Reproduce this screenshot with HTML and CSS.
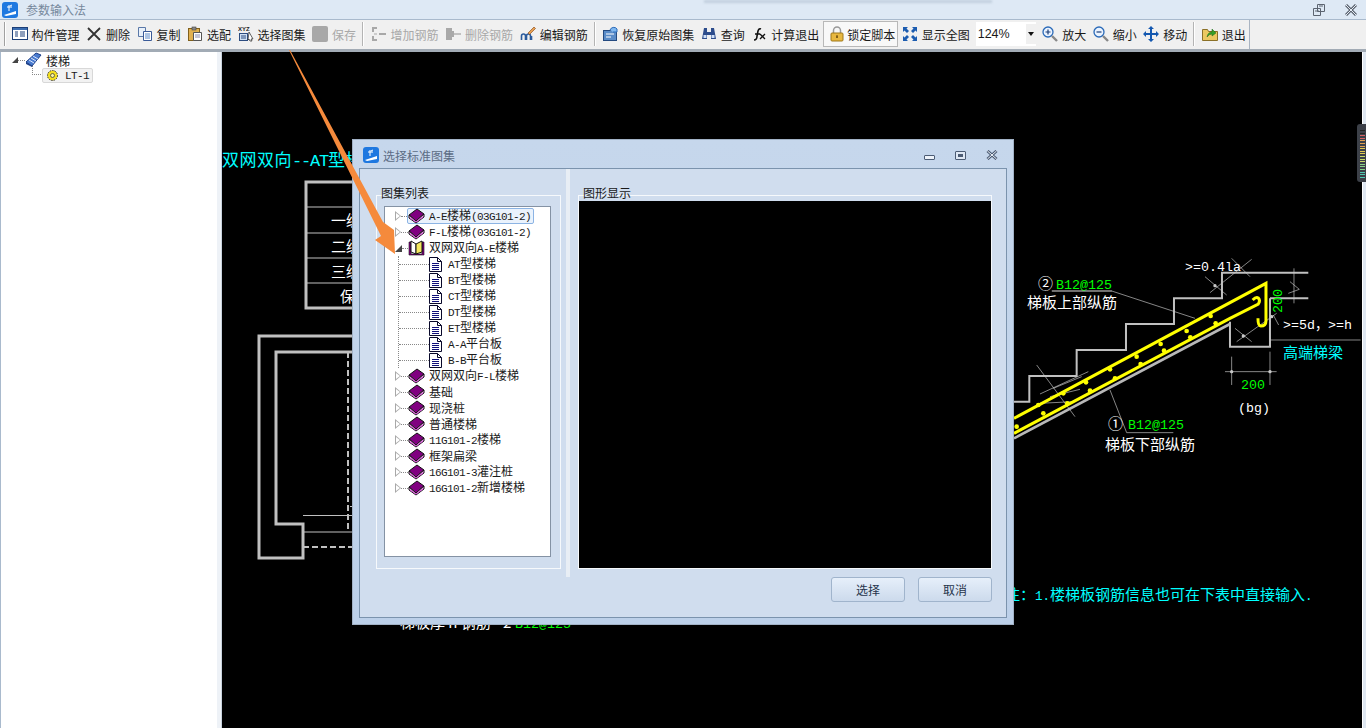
FILE: index.html
```html
<!DOCTYPE html>
<html lang="zh-CN">
<head>
    <meta charset="UTF-8">
    <title>参数输入法</title>
    <link rel="stylesheet" href="styles.css">
</head>
<body>
    <svg class="defs" width="0" height="0">
        <symbol id="book" viewBox="0 0 17 16">
            <path d="M1 7 9 1l7 5-8 7z" fill="#800080" stroke="#111"/>
            <path d="M1 7v3l7 5 8-6V6l-8 7z" fill="#f0a0f0" stroke="#111"/>
            <path d="M2 10l6 4 7-5" fill="none" stroke="#d050d0"/>
        </symbol>
        <symbol id="doc" viewBox="0 0 13 15">
            <path d="M.5.5h8l4 4v10H.5z" fill="#fff" stroke="#08082a"/>
            <path d="M8.5.5v4h4" fill="none" stroke="#08082a"/>
            <path d="M3 6.500h7M3 8.500h7M3 10.500h7M3 12.500h7" stroke="#10107a"/>
        </symbol>
        <symbol id="logo" viewBox="0 0 16 16">
            <rect width="16" height="16" rx="3" fill="#1e78e0"/>
            <path d="M2 13l12-4v3l-10 2z" fill="#fff"/>
            <path d="M7 3v6M5 5h5M10 3l-2 1" stroke="#fff" fill="none"/>
        </symbol>
    </svg>

    <div class="titlebar">
        <svg class="title-logo" width="16" height="16"><use href="#logo"/></svg>
        <span class="title-text">参数输入法</span>
        <div class="win-btns">
            <svg width="12" height="12" viewBox="0 0 12 12"><path d="M4.500.5h7v7h-7zM.5 4.500h7v7h-7zM2 7h4M6 2h4" fill="none" stroke="#5c6470"/></svg>
            <svg width="12" height="12" viewBox="0 0 12 12"><path d="M1 1l10 10M11 1 1 11" stroke="#5c6470" stroke-width="3"/><path d="M1 1l10 10M11 1 1 11" stroke="#e6edf6"/></svg>
        </div>
    </div>

    <div class="toolbar">
        <div class="grip"></div>
        <div class="tool">
            <svg width="16" height="16" viewBox="0 0 16 16"><rect x=".5" y="1.500" width="15" height="12" fill="#fff" stroke="#1c3f78"/><path d="M1 2h14v2H1z" fill="#3a6cb0"/><path d="M3 6h3M3 8h3M3 10h3M8 6h5M8 8h5M8 10h5" stroke="#1c3f78"/></svg>
            <span>构件管理</span>
        </div>
        <div class="tool">
            <svg width="16" height="16" viewBox="0 0 16 16"><path d="M2 2l12 12M14 2 2 14" stroke="#333" stroke-width="1.800"/></svg>
            <span>删除</span>
        </div>
        <div class="tool">
            <svg width="16" height="16" viewBox="0 0 16 16"><path d="M1.500 1.500h7v9h-7z" fill="#e8f0fa" stroke="#5a78a8"/><path d="M6.500 5.500h8v9h-8z" fill="#fff" stroke="#3a5a98"/><path d="M8 8h5M8 10h5M8 12h5" stroke="#5a88c8"/></svg>
            <span>复制</span>
        </div>
        <div class="tool">
            <svg width="16" height="16" viewBox="0 0 16 16"><rect x="1.500" y="2.500" width="11" height="12" fill="#e0b050" stroke="#80601c"/><rect x="5" y="1" width="4" height="3" fill="#888" stroke="#444" stroke-width=".6"/><path d="M6.500 6.500h8v8h-8z" fill="#fff" stroke="#555"/><path d="M8 9h5M8 11h5" stroke="#88a"/></svg>
            <span>选配</span>
        </div>
        <div class="tool">
            <svg width="16" height="16" viewBox="0 0 16 16"><text x="0" y="5" class="xyz">XYZ</text><rect x="1.500" y="7.500" width="8" height="7" fill="#cfe0f4" stroke="#2c4c80"/><path d="M3 10h5M3 12h5" stroke="#2c4c80"/><path d="M11 6l4 7-2 0 1 2-2 0-1-2-1 1z" fill="#fff" stroke="#222" stroke-width=".7"/></svg>
            <span>选择图集</span>
        </div>
        <div class="tool off">
            <svg width="16" height="16" viewBox="0 0 16 16"><rect x="0" y="0" width="16" height="16" rx="2" fill="#a8a8a8"/></svg>
            <span>保存</span>
        </div>
        <div class="tool-sep"></div>
        <div class="tool off">
            <svg width="16" height="16" viewBox="0 0 16 16"><path d="M1 1h5v2H3v3H1zM1 10h2v3h3v2H1zM8 7h7v2H8z" fill="#a8a8a8"/><path d="M3 8h3" stroke="#a8a8a8"/></svg>
            <span>增加钢筋</span>
        </div>
        <div class="tool off">
            <svg width="16" height="16" viewBox="0 0 16 16"><path d="M1 2h6v3h2v6H7v3H1z" fill="#a8a8a8"/><path d="M9 7h7v2H9z" fill="#c0c0c0"/></svg>
            <span>删除钢筋</span>
        </div>
        <div class="tool">
            <svg width="16" height="16" viewBox="0 0 16 16"><path d="M1.500 14v-4q0-2 2-2t2 2v4M6.500 14v-4q0-2 2-2t2 2v4" fill="none" stroke="#2a5a9c" stroke-width="1.600"/><path d="M8 7l6-6 1.500 1.500-6 6z" fill="#e8a050" stroke="#804010" stroke-width=".6"/><path d="M11.500 14v-4" stroke="#2a5a9c" stroke-width="1.600"/></svg>
            <span>编辑钢筋</span>
        </div>
        <div class="tool-sep"></div>
        <div class="tool">
            <svg width="16" height="16" viewBox="0 0 16 16"><rect x="1.500" y="4.500" width="13" height="10" fill="#5a8cc8" stroke="#244a80"/><path d="M4 8h8M4 11h5" stroke="#fff"/><path d="M8 4a4 4 0 0 1 7-1v3h-4" fill="#80b8f0" stroke="#2a6ab8"/></svg>
            <span>恢复原始图集</span>
        </div>
        <div class="tool">
            <svg width="16" height="16" viewBox="0 0 16 16"><path d="M3 2h3v4h4V2h3l2 11h-5V9H6v4H1z" fill="#2c4c8c"/><rect x="2.500" y="9" width="3" height="3" fill="#cfe0f8"/><rect x="10.500" y="9" width="3" height="3" fill="#cfe0f8"/></svg>
            <span>查询</span>
        </div>
        <div class="tool">
            <svg width="16" height="16" viewBox="0 0 16 16"><path d="M3 14q3 0 3-4l1-5q1-3 3-2M4 8h5" fill="none" stroke="#111" stroke-width="1.600"/><path d="M9 8l5 5M14 8l-5 5" stroke="#111" stroke-width="1.300"/></svg>
            <span>计算退出</span>
        </div>
        <div class="tool checked">
            <svg width="16" height="16" viewBox="0 0 16 16"><path d="M4.500 7V4.500a3.500 3.500 0 0 1 7 0V7" fill="none" stroke="#999" stroke-width="1.500"/><rect x="2" y="7" width="12" height="8" rx="1" fill="#e8b840" stroke="#a07818"/><path d="M8 9v3M7 11h2" stroke="#604008"/></svg>
            <span>锁定脚本</span>
        </div>
        <div class="tool">
            <svg width="16" height="16" viewBox="0 0 16 16"><path d="M1 1h5L4.500 2.500 7 5 5 7 2.500 4.500 1 6zM15 1v5l-1.500-1.500L11 7 9 5l2.500-2.500L10 1zM1 15v-5l1.500 1.500L5 9l2 2-2.500 2.500L6 15zM15 15h-5l1.500-1.500L9 11l2-2 2.500 2.500L15 10z" fill="#1c5cb0"/></svg>
            <span>显示全图</span>
        </div>
        <div class="combo">
            <span class="combo-val">124%</span>
            <span class="combo-btn"></span>
        </div>
        <div class="tool">
            <svg width="16" height="16" viewBox="0 0 16 16"><circle cx="6" cy="6" r="5" fill="#eaf3ff" stroke="#2a6ab8" stroke-width="1.300"/><path d="M3.500 6h5M6 3.500v5" stroke="#1c3f78" stroke-width="1.200"/><path d="M10 10l5 5" stroke="#888" stroke-width="2.400"/></svg>
            <span>放大</span>
        </div>
        <div class="tool">
            <svg width="16" height="16" viewBox="0 0 16 16"><circle cx="6" cy="6" r="5" fill="#eaf3ff" stroke="#2a6ab8" stroke-width="1.300"/><path d="M3.500 6h5" stroke="#1c3f78" stroke-width="1.200"/><path d="M10 10l5 5" stroke="#888" stroke-width="2.400"/></svg>
            <span>缩小</span>
        </div>
        <div class="tool">
            <svg width="16" height="16" viewBox="0 0 16 16"><path d="M8 0l3 3H9v4h4V5l3 3-3 3V9H9v4h2l-3 3-3-3h2V9H3v2L0 8l3-3v2h4V3H5z" fill="#1458b0"/></svg>
            <span>移动</span>
        </div>
        <div class="tool-sep"></div>
        <div class="tool">
            <svg width="16" height="16" viewBox="0 0 16 16"><path d="M.5 3.500h5l1 2h9v9H.5z" fill="#ecc860" stroke="#8a7028"/><path d="M5 11q1-5 5-5V3l4 4-4 3V8q-3 0-5 3z" fill="#38a028" stroke="#1c6818" stroke-width=".5"/></svg>
            <span>退出</span>
        </div>
        <div class="toolbar-end"></div>
    </div>
    <div class="toolbar-rule"></div>

    <div class="main">
        <div class="side-tree">
            <div class="side-row">
                <span class="arrow-open"></span>
                <span class="dots"></span>
                <svg width="17" height="16" viewBox="0 0 17 16"><path d="M1 10 11 1l5 2-9 11z" fill="#4a7cd0" stroke="#1c3f88"/><path d="M4 8l5 3M6 6l5 3M8 4l5 3" stroke="#dbe8ff"/><path d="M1 10l6 4v1l-6-3z" fill="#1c3f88"/></svg>
                <span class="side-label">楼梯</span>
            </div>
            <div class="side-row child">
                <span class="elbow"></span>
                <span class="chip">
                    <svg width="13" height="13" viewBox="0 0 13 13"><circle cx="6.500" cy="6.500" r="5" fill="#f4e020" stroke="#333" stroke-dasharray="1.500 1"/><circle cx="6.500" cy="6.500" r="2" fill="#f8f4a0" stroke="#333" stroke-width=".7"/></svg>
                    <span class="mono">LT-1</span>
                </span>
            </div>
        </div>
        <div class="splitter"></div>
        <div class="canvas">
            <svg class="drawing" viewBox="222 52 1140 676" width="1140" height="676">
                <text x="222" y="166" class="cad cyan title-cad">双网双向<tspan class="num-wide">--AT</tspan>型楼梯</text>

                <g class="heavy">
                    <path d="M352 182H306V308H352"/>
                    <path d="M352 336H259V558H303V524H276V352H352"/>
                </g>
                <g class="light">
                    <path d="M306 207H352M306 233H352M306 258H352M306 283H352"/>
                    <path d="M303 532H352" stroke-width="2"/>
                </g>
                <path class="dash" d="M348 352V532M303 547H352"/>
                <path class="thin" d="M303 515.500H352M350 506.500H352"/>
                <text x="331" y="226" class="cad white">一级抗震</text>
                <text x="331" y="252" class="cad white">二级抗震</text>
                <text x="331" y="277" class="cad white">三级抗震</text>
                <text x="340" y="302" class="cad white">保护层</text>
                <text x="400" y="628" class="cad white">梯板厚 h 钢筋</text>
                <text x="503" y="628" class="cad white">2</text>
                <text x="515" y="628" class="num green">B12@125</text>

                <!-- stair detail, drawn in 3x units -->
                <g transform="translate(1010 250) scale(.3333)">
                    <g fill="none" stroke="#c0c0c0" stroke-width="6">
                        <path d="M12 455H58V378H200V300H348V222H492V145H636V68H895"/>
                        <path d="M780 145H895M660 215V290H780V145"/>
                    </g>
                    <path d="M12 565 660 222" stroke="#b8b8b8" stroke-width="8"/>
                    <g fill="none" stroke="#c8c8c8" stroke-width="2">
                        <path d="M780 270H1052M125 123H305L555 205M300 420 350 548H490"/>
                        <path d="M80 345 195 500M90 432 235 365M130 415 215 380M120 440 210 418M90 460 190 455"/>
                        <path d="M665 320V405M780 305V405M645 365H800"/>
                        <path d="M585 80 650 135M600 128 725 28M665 25 720 80"/>
                        <path d="M675 235 725 275M680 275 800 190M790 195 806 225"/>
                        <path d="M852 55V160M840 95 868 118 835 130"/>
                    </g>
                    <g fill="#c8c8c8">
                        <circle cx="615" cy="107" r="5"/>
                        <circle cx="700" cy="258" r="5"/>
                        <circle cx="665" cy="365" r="5"/>
                        <circle cx="780" cy="365" r="5"/>
                        <circle cx="785" cy="200" r="5"/>
                    </g>
                    <g fill="none" stroke="#ffff00" stroke-width="9">
                        <path d="M12 505 768 100V212Q768 228 752 228 744 228 744 205"/>
                        <path d="M12 550 660 205 745 162Q752 152 745 144 738 140 728 150"/>
                    </g>
                    <g fill="#ffff00">
                        <circle cx="20" cy="530" r="7"/><circle cx="85" cy="465" r="7"/><circle cx="100" cy="490" r="7"/>
                        <circle cx="160" cy="430" r="7"/><circle cx="172" cy="460" r="7"/><circle cx="228" cy="397" r="7"/>
                        <circle cx="240" cy="422" r="7"/><circle cx="300" cy="358" r="7"/><circle cx="315" cy="385" r="7"/>
                        <circle cx="380" cy="320" r="7"/><circle cx="392" cy="342" r="7"/><circle cx="452" cy="282" r="7"/>
                        <circle cx="462" cy="302" r="7"/><circle cx="530" cy="243" r="7"/><circle cx="541" cy="262" r="7"/>
                        <circle cx="602" cy="198" r="7"/><circle cx="617" cy="220" r="7"/>
                    </g>
                </g>

                <text x="1038" y="289" class="cad white">②</text>
                <text x="1056" y="289" class="num green">B12@125</text>
                <path class="thin-g" d="M1052 291H1112"/>
                <text x="1027" y="308" class="cad white">梯板上部纵筋</text>
                <text x="1108" y="429" class="cad white">①</text>
                <text x="1128" y="429" class="num green">B12@125</text>
                <text x="1105" y="450" class="cad white">梯板下部纵筋</text>
                <text x="1185" y="271" class="num white">&gt;=0.4la</text>
                <text x="1283" y="329" class="num white">&gt;=5d，&gt;=h</text>
                <text x="1283" y="358" class="cad cyan">高端梯梁</text>
                <text x="1241" y="389" class="num green">200</text>
                <text x="1238" y="412" class="num white">(bg)</text>
                <text x="1282" y="313" class="num green" transform="rotate(-90 1282 313)">200</text>
                <text x="1005" y="600" class="cad cyan">注：<tspan class="num-note">1.</tspan>楼梯板钢筋信息也可在下表中直接输入<tspan class="num-note">.</tspan></text>
            </svg>
        </div>
        <div class="right-edge"></div>
    </div>

    <!-- overlays -->
    <div class="top-shadow"></div>
    <div class="meter">
        <i class="m0"></i><i class="m0"></i><i class="m1"></i><i class="m1"></i><i class="m2"></i><i class="m2"></i><i class="m2"></i>
        <i class="m3"></i><i class="m3"></i><i class="m3"></i><i class="m4"></i><i class="m4"></i><i class="m4"></i><i class="m5"></i>
        <i class="m5"></i><i class="m5"></i><i class="m6"></i><i class="m6"></i><i class="m6"></i>
    </div>

    <div class="dialog">
        <div class="dlg-title">
            <svg width="16" height="16"><use href="#logo"/></svg>
            <span class="dlg-caption">选择标准图集</span>
            <div class="dlg-btns">
                <span class="btn-min"></span>
                <span class="btn-max"></span>
                <svg width="12" height="10" viewBox="0 0 12 10"><path d="M1.500 1l9 8M10.500 1l-9 8" stroke="#4c5c74" stroke-width="3"/><path d="M1.500 1l9 8M10.500 1l-9 8" stroke="#eef3fa"/></svg>
            </div>
        </div>
        <div class="dlg-body">
            <div class="dlg-panes">
                <div class="pane-left">
                    <div class="group">
                        <span class="group-label">图集列表</span>
                        <div class="tree">
                            <div class="row"><span class="tri"></span><span class="dots short"></span><span class="sel"><svg width="17" height="16"><use href="#book"/></svg><span class="row-text"><span class="mono">A-E</span>楼梯<span class="mono">(03G101-2)</span></span></span></div>
                            <div class="row"><span class="tri"></span><span class="dots"></span><svg width="17" height="16"><use href="#book"/></svg><span class="row-text"><span class="mono">F-L</span>楼梯<span class="mono">(03G101-2)</span></span></div>
                            <div class="row"><span class="tri open"></span><span class="dots short"></span>
                                <svg width="17" height="16" viewBox="0 0 17 16"><path d="M1 2h2v12h11V2h2v13H1z" fill="#800080" stroke="#111" stroke-width=".6"/><path d="M3 1l5 3v10l-5-2z" fill="#fff" stroke="#111"/><path d="M8 4l6-3v11l-6 2z" fill="#f4e860" stroke="#111"/></svg>
                                <span class="row-text">双网双向<span class="mono">A-E</span>楼梯</span></div>
                            <div class="sub">
                                <div class="row leaf"><span class="elbow"></span><svg width="13" height="15"><use href="#doc"/></svg><span class="row-text"><span class="mono">AT</span>型楼梯</span></div>
                                <div class="row leaf"><span class="elbow"></span><svg width="13" height="15"><use href="#doc"/></svg><span class="row-text"><span class="mono">BT</span>型楼梯</span></div>
                                <div class="row leaf"><span class="elbow"></span><svg width="13" height="15"><use href="#doc"/></svg><span class="row-text"><span class="mono">CT</span>型楼梯</span></div>
                                <div class="row leaf"><span class="elbow"></span><svg width="13" height="15"><use href="#doc"/></svg><span class="row-text"><span class="mono">DT</span>型楼梯</span></div>
                                <div class="row leaf"><span class="elbow"></span><svg width="13" height="15"><use href="#doc"/></svg><span class="row-text"><span class="mono">ET</span>型楼梯</span></div>
                                <div class="row leaf"><span class="elbow"></span><svg width="13" height="15"><use href="#doc"/></svg><span class="row-text"><span class="mono">A-A</span>平台板</span></div>
                                <div class="row leaf"><span class="elbow"></span><svg width="13" height="15"><use href="#doc"/></svg><span class="row-text"><span class="mono">B-B</span>平台板</span></div>
                            </div>
                            <div class="row"><span class="tri"></span><span class="dots"></span><svg width="17" height="16"><use href="#book"/></svg><span class="row-text">双网双向<span class="mono">F-L</span>楼梯</span></div>
                            <div class="row"><span class="tri"></span><span class="dots"></span><svg width="17" height="16"><use href="#book"/></svg><span class="row-text">基础</span></div>
                            <div class="row"><span class="tri"></span><span class="dots"></span><svg width="17" height="16"><use href="#book"/></svg><span class="row-text">现浇桩</span></div>
                            <div class="row"><span class="tri"></span><span class="dots"></span><svg width="17" height="16"><use href="#book"/></svg><span class="row-text">普通楼梯</span></div>
                            <div class="row"><span class="tri"></span><span class="dots"></span><svg width="17" height="16"><use href="#book"/></svg><span class="row-text"><span class="mono">11G101-2</span>楼梯</span></div>
                            <div class="row"><span class="tri"></span><span class="dots"></span><svg width="17" height="16"><use href="#book"/></svg><span class="row-text">框架扁梁</span></div>
                            <div class="row"><span class="tri"></span><span class="dots"></span><svg width="17" height="16"><use href="#book"/></svg><span class="row-text"><span class="mono">16G101-3</span>灌注桩</span></div>
                            <div class="row"><span class="tri"></span><span class="dots"></span><svg width="17" height="16"><use href="#book"/></svg><span class="row-text"><span class="mono">16G101-2</span>新增楼梯</span></div>
                        </div>
                    </div>
                </div>
                <div class="pane-split"></div>
                <div class="pane-right">
                    <div class="group">
                        <span class="group-label">图形显示</span>
                        <div class="preview"></div>
                    </div>
                </div>
            </div>
            <div class="dlg-foot">
                <button class="dlg-button">选择</button>
                <button class="dlg-button">取消</button>
            </div>
        </div>
    </div>

    <svg class="big-arrow" width="120" height="210" viewBox="285 48 120 210">
        <path d="M289 50 290 50 383 222 394 230 395 254 375 240 381 236z" fill="#f58a3c"/>
    </svg>
</body>
</html>
```

FILE: styles.css
```css
* {
    box-sizing: border-box;
}
html, body {
    margin: 0;
    height: 100%;
}
body {
    width: 1366px;
    height: 728px;
    overflow: hidden;
    position: relative;
    display: flex;
    flex-direction: column;
    font-family: "Noto Sans CJK SC", "Liberation Sans", sans-serif;
    font-size: 12px;
    color: #1a1a1a;
    background: #dee9f5;
}
svg {
    display: block;
    flex: none;
}
.defs {
    position: absolute;
}
.mono {
    font-family: "Liberation Mono", monospace;
    font-size: 11px;
    letter-spacing: -.6px;
    white-space: nowrap;
}

/* title bar */
.titlebar {
    height: 20px;
    display: flex;
    align-items: center;
    padding-left: 2px;
    background: #dee9f5;
    border-bottom: 1px solid #a9bacd;
    flex: none;
}
.title-text {
    margin-left: 8px;
    color: #76889c;
}
.win-btns {
    margin-left: auto;
    display: flex;
    gap: 20px;
    padding-right: 9px;
}

/* toolbar */
.toolbar {
    height: 29px;
    display: flex;
    align-items: center;
    padding: 0 0 1px 4px;
    background: #f0f0f0;
    flex: none;
}
.toolbar-end {
    margin-left: auto;
    width: 117px;
    height: 29px;
    border-left: 1px solid #a9b4c2;
}
.grip {
    width: 2px;
    height: 24px;
    margin-right: 2px;
    border-left: 1px solid #a0a0a0;
    border-right: 1px solid #fff;
}
.tool {
    display: flex;
    align-items: center;
    gap: 4px;
    height: 24px;
    padding: 0 3px 0 3.500px;
    white-space: nowrap;
}
.tool.off {
    color: #a8a8a8;
}
.tool.checked {
    height: 26px;
    padding: 0 2px 0 5px;
    gap: 2px;
    margin: 0 0 0 1px;
    background: #f8f8f8;
    border: 1px solid #b8b8b8;
}
.tool-sep {
    width: 2px;
    height: 24px;
    margin: 0 3px;
    background: #b4b4b4;
    border-right: 1px solid #fff;
}
.combo {
    width: 60px;
    height: 24px;
    margin: 0 3px 0 3px;
    display: flex;
    align-items: center;
    background: #fff;
    font-size: 12.500px;
    font-family: "Liberation Sans", sans-serif;
}
.combo-val {
    flex: 1;
    padding-left: 2px;
}
.combo-btn {
    width: 10px;
    height: 20px;
    background: #f0f0f0;
    position: relative;
}
.combo-btn::after {
    content: "";
    position: absolute;
    left: 2px;
    top: 8px;
    border: 3px solid transparent;
    border-top: 4px solid #111;
}
.toolbar-rule {
    height: 3px;
    background: #a2abb5;
    flex: none;
}

/* main area */
.main {
    flex: 1;
    display: flex;
    min-height: 0;
}
.side-tree {
    width: 217px;
    background: #fff;
    border-left: 1px solid #a9bacd;
}
.side-row {
    height: 16px;
    display: flex;
    align-items: center;
    padding-left: 11px;
    font-size: 12px;
}
.arrow-open {
    width: 0;
    height: 0;
    border-left: 6px solid transparent;
    border-bottom: 6px solid #444;
}
.side-row .dots {
    width: 7px;
}
.side-label {
    margin-left: 4px;
}
.side-row.child {
    padding-left: 31px;
    align-items: flex-start;
}
.side-row.child .elbow {
    height: 9px;
    width: 9px;
    flex: none;
    margin-top: -2px;
}
.chip {
    display: flex;
    align-items: center;
    gap: 6px;
    height: 15px;
    width: 51px;
    padding: 0 4px 0 3px;
    margin-left: 1px;
    background: #f2f2f2;
    border: 1px solid #d8d8d8;
    border-radius: 2px;
}
.splitter {
    width: 5px;
    background: #eef2f7;
    border-right: 1px solid #c8d2de;
}
.canvas {
    width: 1140px;
    background: #000;
    overflow: hidden;
}
.right-edge {
    flex: 1;
    background: #dfe7f1;
    border-left: 1px solid #fff;
}
.drawing text {
    font-family: "Noto Sans CJK SC", sans-serif;
}
.cad {
    font-size: 15px;
}
.drawing .num,
.num {
    font-family: "Liberation Mono", monospace;
    font-size: 13.300px;
}
.drawing .num-wide {
    font-family: "Liberation Mono", monospace;
    font-size: 17px;
    letter-spacing: -1.200px;
}
.drawing .num-note {
    font-family: "Liberation Mono", monospace;
    font-size: 12.500px;
}
.cyan {
    fill: #00ffff;
}
.white {
    fill: #fff;
}
.green {
    fill: #00ff00;
}
.title-cad {
    font-size: 17px;
    letter-spacing: .5px;
}
.heavy path {
    fill: none;
    stroke: #c0c0c0;
    stroke-width: 3;
}
.light path {
    fill: none;
    stroke: #c0c0c0;
    stroke-width: 1;
}
.dash {
    fill: none;
    stroke: #c0c0c0;
    stroke-width: 2;
    stroke-dasharray: 6 3;
}
.thin {
    fill: none;
    stroke: #c0c0c0;
    stroke-width: 1;
}
.thin-g {
    fill: none;
    stroke: #c8c8c8;
    stroke-width: .7;
}
.xyz {
    font-family: "Liberation Sans", sans-serif;
    font-size: 6px;
    font-weight: bold;
    fill: #222;
}

/* things lying over the window */
.top-shadow {
    position: absolute;
    left: 704px;
    top: 0;
    width: 288px;
    height: 3px;
    background: #c2cfde;
    filter: blur(1px);
}
.meter {
    position: absolute;
    left: 1357px;
    top: 124px;
    width: 9px;
    height: 58px;
    padding: 6px 0 0 3px;
    background: #3c4048;
    border-radius: 3px 0 0 3px;
}
.meter i {
    display: block;
    width: 5px;
    height: 1px;
    margin-bottom: 1.600px;
}
.m0 { background: #222; }
.m1 { background: #d86060; }
.m2 { background: #e0a050; }
.m3 { background: #e0c850; }
.m4 { background: #c8d868; }
.m5 { background: #88d088; }
.m6 { background: #50c8b0; }

/* dialog */
.dialog {
    position: absolute;
    left: 352px;
    top: 139px;
    width: 662px;
    height: 486px;
    padding: 0 6px 6px;
    display: flex;
    flex-direction: column;
    background: linear-gradient(#c6d7ec, #bcd0e9);
    border: 1px solid #a2b2c6;
}
.dlg-title {
    height: 28px;
    display: flex;
    align-items: center;
    padding: 2px 0 0 4px;
    flex: none;
}
.dlg-caption {
    margin-left: 4px;
    color: #5c6c84;
}
.dlg-btns {
    margin-left: auto;
    display: flex;
    align-items: center;
    gap: 20px;
    padding-right: 9px;
}
.btn-min {
    width: 11px;
    height: 5px;
    margin-top: 4px;
    background: #eef3fa;
    border: 1px solid #4c5c74;
    border-radius: 1px;
}
.btn-max {
    width: 11px;
    height: 9px;
    background: #dfe8f4;
    border: 1px solid #4c5c74;
    border-radius: 1px;
    box-shadow: inset 0 0 0 2px #dfe8f4, inset 0 0 0 4px #4c5c74;
}
.dlg-body {
    flex: 1;
    display: flex;
    flex-direction: column;
    background: #d0ddee;
    border: 1px solid #7b93ad;
}
.dlg-panes {
    height: 408px;
    display: flex;
}
.pane-left {
    width: 206px;
    padding: 26px 5px 8px 16px;
}
.pane-split {
    width: 4px;
    background: #e8eef5;
}
.pane-right {
    flex: 1;
    padding: 26px 14px 8px 8px;
}
.group {
    position: relative;
    height: 100%;
    border: 1px solid #f6f9fc;
    padding: 10px 9px 11px 7px;
}
.group-label {
    position: absolute;
    left: 3px;
    top: -11px;
    padding: 0 1px;
    line-height: 16px;
}
.tree {
    height: 100%;
    padding: 1px 0 0 10px;
    background: #fff;
    border: 1px solid #8492a4;
}
.row {
    height: 16px;
    display: flex;
    align-items: center;
    white-space: nowrap;
}
.tri {
    width: 0;
    height: 0;
    border-top: 5px solid transparent;
    border-bottom: 5px solid transparent;
    border-left: 6px solid #a8a8a8;
    position: relative;
}
.tri::after {
    content: "";
    position: absolute;
    left: -5px;
    top: -3px;
    border-top: 3px solid transparent;
    border-bottom: 3px solid transparent;
    border-left: 4px solid #fff;
}
.tri.open {
    border-top: 0;
    border-left: 7px solid transparent;
    border-bottom: 7px solid #444;
}
.tri.open::after {
    display: none;
}
.dots {
    width: 7px;
    height: 0;
    border-top: 1px dotted #888;
}
.dots.short {
    width: 6px;
}
.row-text {
    margin-left: 3px;
    padding: 0 1px;
    line-height: 14px;
}
.sel {
    display: flex;
    align-items: center;
    height: 16px;
    margin-top: -1px;
    padding-right: 1px;
    background: #eaf2fc;
    border: 1px solid #8cb4e4;
    border-radius: 2px;
}
.sub {
    margin-left: 3px;
    border-left: 1px dotted #888;
    height: 112px;
}
.elbow {
    width: 30px;
    height: 0;
    border-top: 1px dotted #888;
}
.side-row.child .elbow {
    border-left: 1px dotted #888;
    border-bottom: 1px dotted #888;
    border-top: 0;
}
.leaf .row-text {
    margin-left: 5px;
}
.preview {
    margin: -5px -9px -11px -7px;
    height: calc(100% + 16px);
    background: #000;
}
.dlg-foot {
    flex: 1;
    display: flex;
    justify-content: flex-end;
    gap: 13px;
    padding: 0 14px 0 0;
}
.dlg-button {
    width: 74px;
    height: 25px;
    padding: 0;
    font: inherit;
    color: #26344c;
    background: linear-gradient(#e6effa, #ccdaec);
    border: 1px solid #a0b4cc;
    border-radius: 3px;
}

.big-arrow {
    position: absolute;
    left: 285px;
    top: 48px;
}
```
